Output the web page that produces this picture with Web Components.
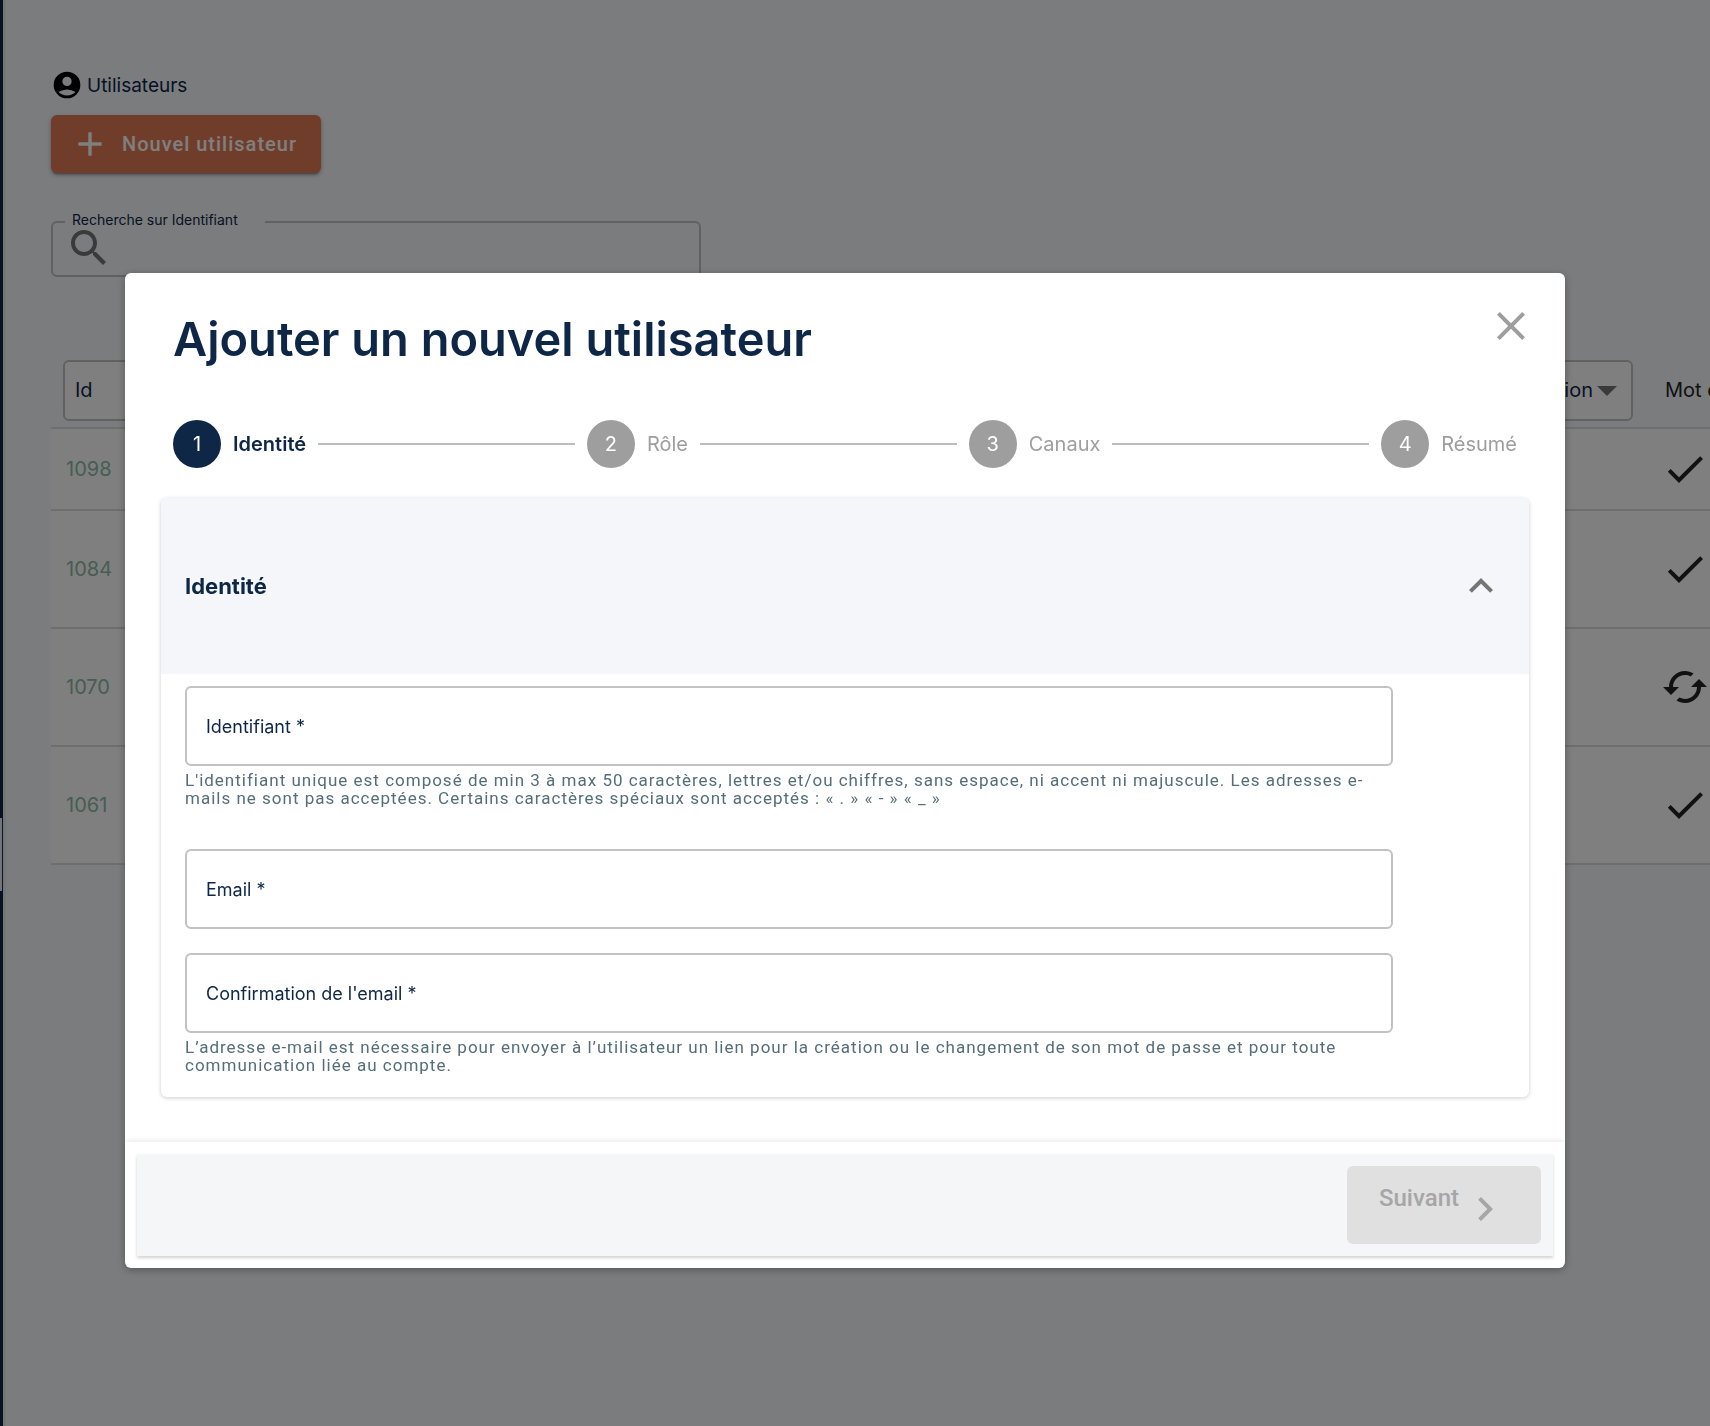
<!DOCTYPE html>
<html lang="fr">
<head>
<meta charset="utf-8">
<title>Utilisateurs</title>
<style>
  :root {
    --navy: #0f2747;
    --grey: #9e9e9e;
    --outline: #c2c2c2;
    --help: #546e7a;
    --roboto: Roboto, "Liberation Sans", sans-serif;
  }
  body {
    margin: 0;
    background: #f6f8fc;
    color: var(--navy);
    font-family: Inter, "Liberation Sans", sans-serif;
    font-size: 20px;
  }
</style>
</head>
<body>
<app-shell>
  <page-title icon="account">Utilisateurs</page-title>
  <new-button>Nouvel utilisateur</new-button>
  <search-field>Recherche sur Identifiant</search-field>
  <user-table></user-table>
</app-shell>

<modal-dialog heading="Ajouter un nouvel utilisateur">
  <form-stepper steps="Identité,Rôle,Canaux,Résumé" current="1"></form-stepper>
  <expansion-panel heading="Identité">
    <outlined-field label="Identifiant *" hint="L'identifiant unique est composé de min 3 à max 50 caractères, lettres et/ou chiffres, sans espace, ni accent ni majuscule. Les adresses e-mails ne sont pas acceptées. Certains caractères spéciaux sont acceptés : « . » « - » « _ »"></outlined-field>
    <outlined-field label="Email *" type="email"></outlined-field>
    <outlined-field label="Confirmation de l'email *" type="email" hint="L’adresse e-mail est nécessaire pour envoyer à l’utilisateur un lien pour la création ou le changement de son mot de passe et pour toute communication liée au compte."></outlined-field>
  </expansion-panel>
  <next-button slot="footer">Suivant</next-button>
</modal-dialog>

<script>
const ICONS = {
  account: '<path fill-rule="evenodd" d="M12 2a10 10 0 1 0 0 20 10 10 0 1 0 0-20zm0 3.800a3.500 3.500 0 1 1 0 7 3.500 3.500 0 1 1 0-7zM5.600 17.300Q8.600 15.300 12 15.300T18.400 17.300Q15.800 19.900 12 19.900T5.600 17.300z"/>',
  plus: '<path d="M19 13h-6v6h-2v-6H5v-2h6V5h2v6h6v2z"/>',
  search: '<path d="M15.500 14h-.79l-.28-.27C15.410 12.590 16 11.110 16 9.500 16 5.910 13.090 3 9.500 3S3 5.910 3 9.500 5.910 16 9.500 16c1.610 0 3.090-.59 4.230-1.570l.27.28v.79l5 4.990L20.490 19l-4.990-5zm-6 0C7.010 14 5 11.990 5 9.500S7.010 5 9.500 5 14 7.010 14 9.500 11.990 14 9.500 14z"/>',
  check: '<path d="M9 16.170L4.830 12l-1.420 1.410L9 19 21 7l-1.410-1.410z"/>',
  sync: '<path d="M19 8l-4 4h3c0 3.310-2.690 6-6 6-1.010 0-1.970-.25-2.800-.7l-1.460 1.460C8.970 19.540 10.430 20 12 20c4.420 0 8-3.580 8-8h3l-4-4zM6 12c0-3.310 2.690-6 6-6 1.010 0 1.970.25 2.800.7l1.460-1.460C15.030 4.460 13.570 4 12 4c-4.420 0-8 3.580-8 8H1l4 4 4-4H6z"/>',
  close: '<path d="M19 6.410L17.590 5 12 10.590 6.410 5 5 6.410 10.590 12 5 17.590 6.410 19 12 13.410 17.590 19 19 17.590 13.410 12z"/>',
  up: '<path d="M12 8l-6 6 1.410 1.410L12 10.830l4.590 4.580L18 14z"/>',
  right: '<path d="M10 6L8.590 7.410 13.170 12l-4.580 4.590L10 18l6-6z"/>',
  dropdown: '<path d="M7 10l5 5 5-5z"/>'
};

class BaseElement extends HTMLElement {
  connectedCallback() {
    if (this.shadowRoot) return;
    this.attachShadow({ mode: "open" });
    this.shadowRoot.innerHTML = `<style>* { box-sizing: border-box; }${this.styles()}</style>${this.markup()}`;
  }
}

class AppIcon extends BaseElement {
  styles() {
    return `
      :host { display: block; flex: none; width: var(--size, 48px); height: var(--size, 48px); }
      svg { display: block; width: 100%; height: 100%; fill: currentColor; }`;
  }
  markup() {
    return `<svg viewBox="0 0 24 24" aria-hidden="true">${ICONS[this.getAttribute("name")]}</svg>`;
  }
}

class AppShell extends BaseElement {
  styles() {
    return `
      :host { display: flex; min-height: 100vh; overflow: hidden; }
      nav { flex: none; width: 3px; background: var(--navy); }
      .handle { width: 2px; height: 73px; margin-top: 818px; background: #e8ebf0; }
      main {
        flex: 1;
        min-width: 0;
        padding: 65px 0 0 45px;
        border-left: 3px solid #ebecf0;
      }`;
  }
  markup() {
    return `<nav><div class="handle"></div></nav><main><slot></slot></main>`;
  }
}

class PageTitle extends BaseElement {
  styles() {
    return `
      :host { display: flex; align-items: center; gap: 4px; height: 40px; font-size: 19px; }
      app-icon { --size: 32px; color: #000; }`;
  }
  markup() {
    return `<app-icon name="${this.getAttribute("icon")}"></app-icon><slot></slot>`;
  }
}

class NewButton extends BaseElement {
  styles() {
    return `
      :host { display: block; margin-top: 10px; }
      button {
        display: flex;
        align-items: center;
        gap: 12px;
        height: 58px;
        padding: 0 24px 0 19px;
        border: 0;
        border-radius: 6px;
        background: #e27a56;
        color: #fff;
        font: 500 20px/24px var(--roboto);
        letter-spacing: 1px;
        box-shadow: 0 3px 2px -2px rgba(0,0,0,.3), 0 2px 4px rgba(0,0,0,.3);
      }
      app-icon { --size: 40px; }`;
  }
  markup() {
    return `<button type="button"><app-icon name="plus"></app-icon><span><slot></slot></span></button>`;
  }
}

class SearchField extends BaseElement {
  styles() {
    return `
      :host { display: block; margin-top: 38px; }
      fieldset {
        display: block;
        width: 650px;
        max-width: 100%;
        height: 66px;
        margin: 0;
        padding: 0 12px;
        border: 2px solid var(--outline);
        border-radius: 6px;
      }
      legend { width: 200px; padding: 0 7px 4px; font-size: 14px; line-height: 18px; }
      label { display: block; }
      .row { display: flex; align-items: center; height: 30px; }
      app-icon { color: #757575; }
      input { flex: 1; min-width: 0; border: 0; outline: 0; background: none; font: inherit; }`;
  }
  markup() {
    return `
      <fieldset>
        <legend><label for="search"><slot></slot></label></legend>
        <div class="row"><app-icon name="search"></app-icon><input id="search" type="search"></div>
      </fieldset>`;
  }
}

const USERS = [
  { id: 1098, icon: "check", short: true },
  { id: 1084, icon: "check" },
  { id: 1070, icon: "sync" },
  { id: 1061, icon: "check" }
];

class UserTable extends BaseElement {
  styles() {
    return `
      :host { display: block; margin-top: 76px; }
      table {
        width: calc(100% + 110px);
        table-layout: fixed;
        border-collapse: collapse;
      }
      .id { width: 320px; }
      .password { width: 175px; }
      th { height: 75px; padding: 0 12px; font-weight: 400; text-align: left; }
      th.password, td.password { padding: 0 16px; }
      th.password { padding-left: 20px; color: #222; }
      .select {
        display: flex;
        align-items: center;
        height: 61px;
        border: 2px solid var(--outline);
        border-radius: 6px;
        background: #fff;
      }
      .select app-icon { margin-left: -10px; color: #757575; }
      select {
        flex: 1;
        min-width: 0;
        padding: 0 0 0 10px;
        border: 0;
        appearance: none;
        background: none;
        color: var(--navy);
        font: inherit;
      }
      .end select { text-align: right; text-align-last: right; }
      td { height: 118px; padding: 0 15px; background: #fff; color: #8cbaa8; }
      tr { border-bottom: 2px solid #dcdcdc; }
      .short td { height: 82px; }
      td app-icon { color: #222; }`;
  }
  markup() {
    const rows = USERS.map(user => `
      <tr class="${user.short ? "short" : ""}">
        <td>${user.id}</td>
        <td></td>
        <td class="password"><app-icon name="${user.icon}"></app-icon></td>
      </tr>`).join("");
    return `
      <table>
        <thead>
          <tr>
            <th class="id"><div class="select"><select aria-label="Id"><option>Id</option></select><app-icon name="dropdown"></app-icon></div></th>
            <th><div class="select end"><select aria-label="Authentification"><option>Authentification</option></select><app-icon name="dropdown"></app-icon></div></th>
            <th class="password">Mot de passe</th>
          </tr>
        </thead>
        <tbody>${rows}</tbody>
      </table>`;
  }
}

class ModalDialog extends BaseElement {
  styles() {
    return `
      :host {
        position: fixed;
        inset: 0;
        overflow: auto;
        padding: 273px 145px 48px 125px;
        background: rgba(0,0,0,.5);
      }
      .surface {
        border-radius: 6px;
        background: #fff;
        box-shadow: 0 2px 8px rgba(0,0,0,.3);
      }
      header { display: flex; align-items: flex-start; padding: 29px 30px 0 48px; }
      h1 { flex: 1; margin: 0; font-size: 47px; line-height: 74px; font-weight: 600; }
      button { padding: 0; border: 0; background: none; color: var(--grey); }
      .content { padding: 44px 36px 45px; }
      footer {
        padding: 12px;
        border-radius: 0 0 6px 6px;
        box-shadow: 0 -3px 5px -1px rgba(0,0,0,.08);
      }
      .actions {
        display: flex;
        justify-content: flex-end;
        padding: 12px;
        background: #f4f6f8;
        box-shadow: 0 2px 3px rgba(0,0,0,.18);
      }`;
  }
  markup() {
    return `
      <div class="surface" role="dialog" aria-modal="true" aria-labelledby="heading">
        <header>
          <h1 id="heading">${this.getAttribute("heading")}</h1>
          <button type="button" aria-label="Fermer"><app-icon name="close"></app-icon></button>
        </header>
        <div class="content"><slot></slot></div>
        <footer><div class="actions"><slot name="footer"></slot></div></footer>
      </div>`;
  }
}

class FormStepper extends BaseElement {
  styles() {
    return `
      :host { display: block; padding: 0 12px; }
      ol { display: flex; align-items: center; gap: 12px; margin: 0; padding: 0; list-style: none; }
      li { display: flex; align-items: center; gap: 12px; color: var(--grey); }
      .line { flex: 1; height: 2px; background: #bdbdbd; }
      .number {
        display: grid;
        place-items: center;
        width: 48px;
        height: 48px;
        border-radius: 50%;
        background: var(--grey);
        color: #fff;
      }
      .current { color: var(--navy); font-weight: 600; }
      .current .number { background: var(--navy); font-weight: 400; }`;
  }
  markup() {
    const current = Number(this.getAttribute("current"));
    const steps = this.getAttribute("steps").split(",").map((label, i) => `
      <li class="${i + 1 === current ? "current" : ""}"><span class="number">${i + 1}</span><span>${label}</span></li>`);
    return `<ol>${steps.join('<li class="line" role="presentation"></li>')}</ol>`;
  }
}

class ExpansionPanel extends BaseElement {
  styles() {
    return `
      :host {
        display: block;
        margin-top: 30px;
        border-radius: 6px;
        overflow: hidden;
        box-shadow: 0 1px 4px rgba(0,0,0,.2);
      }
      button {
        display: flex;
        align-items: center;
        justify-content: space-between;
        width: 100%;
        height: 176px;
        padding: 0 24px;
        border: 0;
        background: #f4f6fa;
        color: var(--navy);
        font: inherit;
        font-size: 22px;
        font-weight: 700;
      }
      app-icon { color: #757575; }
      .body { padding: 12px 136px 23px 24px; }`;
  }
  markup() {
    return `
      <button type="button" aria-expanded="true">${this.getAttribute("heading")}<app-icon name="up"></app-icon></button>
      <div class="body"><slot></slot></div>`;
  }
}

class OutlinedField extends BaseElement {
  styles() {
    return `
      :host { display: block; }
      :host(:nth-of-type(2)) { margin-top: 42px; }
      :host(:nth-of-type(3)) { margin-top: 24px; }
      .box {
        display: flex;
        align-items: center;
        gap: 8px;
        height: 80px;
        padding: 0 19px;
        border: 2px solid var(--outline);
        border-radius: 6px;
        font-size: 18px;
      }
      input { flex: 1; min-width: 0; border: 0; outline: 0; background: none; color: inherit; font: inherit; }
      p { margin: 5px 0 0; color: var(--help); font: 17px/18px var(--roboto); letter-spacing: 1px; }`;
  }
  markup() {
    const hint = this.getAttribute("hint");
    return `
      <div class="box">
        <label for="field">${this.getAttribute("label")}</label>
        <input id="field" type="${this.getAttribute("type") || "text"}" required>
      </div>
      ${hint ? `<p>${hint}</p>` : ""}`;
  }
}

class NextButton extends BaseElement {
  styles() {
    return `
      button {
        display: flex;
        align-items: flex-end;
        gap: 2px;
        height: 78px;
        padding: 0 32px 11px;
        border: 0;
        border-radius: 6px;
        background: #e0e0e0;
        color: #a6a6a6;
        font: 500 24px/32px var(--roboto);
      }
      span { align-self: flex-start; padding-top: 16px; }`;
  }
  markup() {
    return `<button type="button" disabled><span><slot></slot></span><app-icon name="right"></app-icon></button>`;
  }
}

customElements.define("app-icon", AppIcon);
customElements.define("app-shell", AppShell);
customElements.define("page-title", PageTitle);
customElements.define("new-button", NewButton);
customElements.define("search-field", SearchField);
customElements.define("user-table", UserTable);
customElements.define("modal-dialog", ModalDialog);
customElements.define("form-stepper", FormStepper);
customElements.define("expansion-panel", ExpansionPanel);
customElements.define("outlined-field", OutlinedField);
customElements.define("next-button", NextButton);
</script>
</body>
</html>
